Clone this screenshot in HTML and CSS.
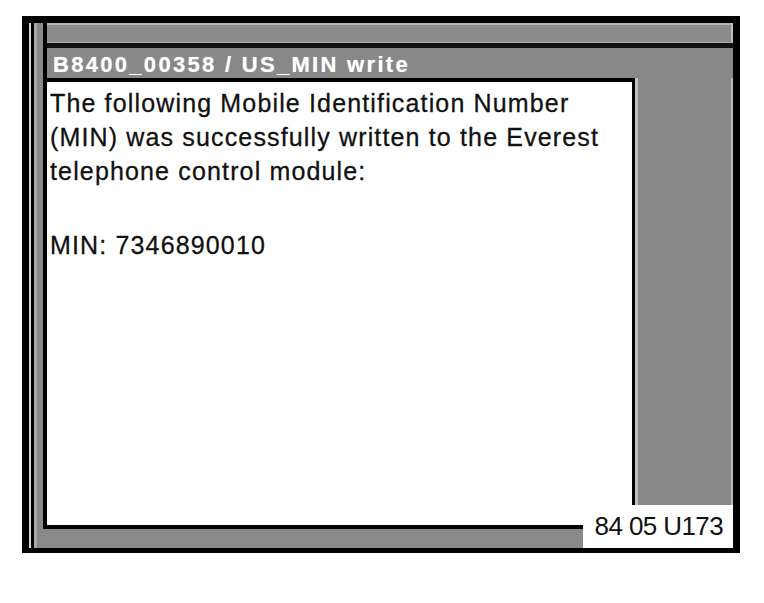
FILE: index.html
```html
<!DOCTYPE html>
<html>
<head>
<meta charset="utf-8">
<link rel="stylesheet" href="styles.css">
</head>
<body>
<div class="figure">
  <div class="rail-light"></div>
  <div class="rail-dark"></div>
  <div class="panel">
    <div class="inner">
      <div class="topbar"></div>
      <div class="window">
        <div class="title">B8400_00358 / US_MIN write</div>
        <div class="client">
          <div class="content">
            <p class="msg">The following Mobile Identification Number<br>(MIN) was successfully written to the Everest<br>telephone control module:</p>
            <p class="min">MIN: 7346890010</p>
          </div>
          <div class="side"></div>
        </div>
      </div>
    </div>
  </div>
  <div class="label">84 05 U173</div>
</div>
</body>
</html>
```
FILE: styles.css
```css
html, body {
  margin: 0;
  padding: 0;
  background: #ffffff;
}
body {
  width: 764px;
  height: 603px;
  overflow: hidden;
  font-family: "Liberation Sans", Arial, sans-serif;
}
.figure {
  position: relative;
  margin: 16px 0 0 22px;
  width: 718px;
  height: 537px;
  box-sizing: border-box;
  background: #000;
  padding: 7px 7px 5px 7px;
  display: flex;
}
.rail-light {
  width: 2px;
  background: #d6d6d6;
}
.rail-dark {
  width: 3px;
  background: #000;
}
.panel {
  flex: 1;
  background: #898989;
  padding: 0 0 19px 9px;
  display: flex;
  box-shadow: inset 3px 0 0 #a8a8a8;
}
.inner {
  flex: 1;
  display: flex;
  flex-direction: column;
  border-left: 4px solid #000;
  border-bottom: 4px solid #000;
}
.topbar {
  height: 20px;
  box-sizing: border-box;
  background: #8b8b8b;
  border-top: 2px solid #b4b4b4;
  border-bottom: 1px solid #b0b0b0;
  border-right: 2px solid #bdbdbd;
}
.window {
  flex: 1;
  display: flex;
  flex-direction: column;
  border-top: 5px solid #111;
}
.title {
  height: 30px;
  line-height: 34px;
  padding-left: 6px;
  color: #fff;
  font-weight: bold;
  font-size: 22px;
  letter-spacing: 2.3px;
  white-space: nowrap;
  background: #888;
  text-shadow: 0 0 1px #ccc;
}
.client {
  flex: 1;
  display: flex;
}
.content {
  width: 588px;
  box-sizing: border-box;
  background: #fff;
  border-top: 4px solid #000;
  border-right: 3px solid #000;
  padding: 4px 0 0 3px;
  color: #111;
  font-size: 25px;
  line-height: 34px;
  letter-spacing: 1.15px;
  white-space: nowrap;
  -webkit-text-stroke: 0.3px #111;
}
.content p {
  margin: 0;
}
.content .min {
  margin-top: 40px;
}
.side {
  flex: 1;
  background: #888;
  border-left: 3px solid #c2c2c2;
  border-right: 2px solid #b8b8b8;
}
.label {
  position: absolute;
  right: 7px;
  bottom: 5px;
  width: 150px;
  height: 43px;
  background: #fff;
  color: #111;
  font-size: 26px;
  line-height: 43px;
  letter-spacing: -0.6px;
  text-align: right;
  padding-right: 10px;
  box-sizing: border-box;
}
```
